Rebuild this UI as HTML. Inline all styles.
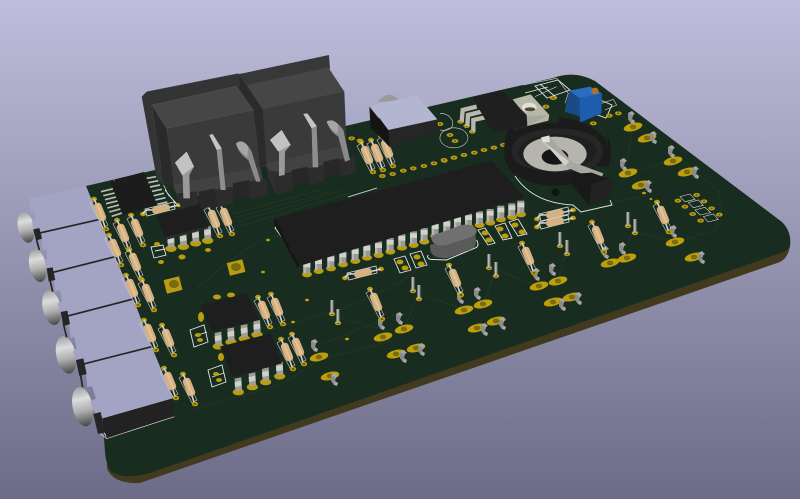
<!DOCTYPE html>
<html><head><meta charset="utf-8"><title>PCB 3D view</title>
<style>html,body{margin:0;padding:0;width:800px;height:499px;overflow:hidden;background:#8f8fae}svg{display:block}</style></head>
<body>
<svg width="800" height="499" viewBox="0 0 800 499" xmlns="http://www.w3.org/2000/svg">
<defs>
<linearGradient id="bg" x1="0" y1="0" x2="0" y2="1"><stop offset="0" stop-color="#bebedc"/><stop offset="1" stop-color="#6c6c88"/></linearGradient>
<linearGradient id="met" x1="0" y1="0" x2="0" y2="1"><stop offset="0" stop-color="#a0a0a0"/><stop offset=".3" stop-color="#dcdcdc"/><stop offset=".6" stop-color="#b0b0b0"/><stop offset="1" stop-color="#484848"/></linearGradient>
<g id="r">
<path d="M-10,-9 L-5,-12 L8,13 L3,16 Z" fill="none" stroke="#cfcfcf" stroke-width=".6"/>
<ellipse cx="-6" cy="-13" rx="3" ry="2.2" fill="#b99c10"/><ellipse cx="6" cy="17" rx="3.2" ry="2.3" fill="#b99c10"/>
<ellipse cx="6" cy="17" rx="1.4" ry="1" fill="#6d5c10"/>
<path d="M-6,-13 L0,0 L5,15" stroke="#cfcfcf" stroke-width="1.6" fill="none"/>
<rect x="-9.5" y="-4" width="19" height="8" rx="3.5" fill="#d6b283" transform="rotate(68)"/>
<rect x="-8.5" y="-1.2" width="17" height="2" rx="1" fill="#e2c496" transform="rotate(68)"/>
</g>
<g id="rh">
<path d="M-16,0 L-14,7 L14,0 L13,-7 Z" fill="none" stroke="#ddd" stroke-width=".8"/>
<ellipse cx="-18" cy="5" rx="3" ry="2.2" fill="#b99c10"/><ellipse cx="18" cy="-4" rx="3" ry="2.2" fill="#b99c10"/>
<path d="M-18,5 Q-16,0 -10,1 L10,-2 L18,-4" stroke="#d5d5d5" stroke-width="1.6" fill="none"/>
<rect x="-9" y="-3.5" width="18" height="7" rx="3" fill="#d6b283" transform="rotate(-13)"/>
</g>
<g id="o"><ellipse rx="9.5" ry="4" fill="#bd9f0c" transform="rotate(-14)"/><ellipse rx="3.2" ry="2.4" fill="#7a6a12"/></g>
<g id="c"><path d="M-3,-5 L1,-7 L4,-4 L2,-3 L1,1 L4,3 L3,6 L0,5 L-3,1 Z" fill="#a6a6a6"/><path d="M-3,-5 L-3,1 L0,5 L1,1 L1,-3 Z" fill="#8b8b8b"/></g>
<g id="p"><ellipse cx="0" cy="6" rx="3.2" ry="2.2" fill="#b99c10"/><ellipse cx="0" cy="6" rx="1.3" ry="1" fill="#6d5c10"/><rect x="-1.4" y="-8" width="2.8" height="14" fill="#9a9a9a"/><rect x="-1.4" y="-8" width="1.2" height="14" fill="#bdbdbd"/></g>
<g id="dp"><ellipse cx="1" cy="23" rx="15" ry="9" fill="#b99c10"/><rect x="-10" y="-18" width="21" height="38" fill="#9a9a94"/><rect x="-10" y="-12" width="21" height="14" fill="#d2d2cc"/><rect x="-10" y="2" width="7" height="18" fill="#b8b8b2"/></g>
<g id="v"><ellipse rx="10" ry="6" fill="#b99c10"/><ellipse rx="3.5" ry="2.5" fill="#5f5312"/></g>
<g id="ep"><ellipse cx="1" cy="24" rx="17" ry="10" fill="#b99c10"/><path d="M-10,-16 L10,-20 L12,18 L-8,22 Z" fill="#9f9f9a"/><path d="M-10,-6 L10,-10 L11,5 L-9,9 Z" fill="#cfcfc9"/></g>
</defs>
<rect width="800" height="499" fill="url(#bg)"/>

<!-- board edge -->
<path d="M107,468 C110,478 122,484 140,483 L780,262 Q788,258 790,246 L786,240 L107,460 Z" fill="#413a1e"/>
<!-- board -->
<path d="M86,186 L553,78 Q575,70 595,81 L782,222 Q792,232 790,246 Q788,251 778,254 L150,473 Q125,480 112,472 Q106,466 105,452 Z" fill="#182d1f"/>

<!-- traces -->
<g fill="none" stroke="#263f1f" stroke-width=".6">
<path d="M232,214 L320,190"/><path d="M234,218 L330,192"/><path d="M236,222 L345,190"/><path d="M240,226 L350,193"/>
<path d="M197,288 L227,263 L260,240 L290,232"/>
<path d="M200,300 L212,332 L245,400"/>
<path d="M270,330 L345,308 L400,283 L430,258 L480,245"/>
<path d="M338,318 L390,331"/><path d="M419,293 L404,329"/><path d="M419,293 L464,310"/><path d="M496,270 L483,304"/><path d="M496,270 L539,286"/><path d="M567,248 L558,281"/>
<path d="M190,410 L280,385 L320,360 L395,340"/>
<path d="M320,345 L395,315"/>
<path d="M633,127 L625,170"/><path d="M628,173 L673,160"/>
<path d="M680,158 L718,191 L722,207 L715,230 L677,242"/><path d="M635,232 L677,242"/><path d="M632,232 L620,262"/>
<path d="M600,205 L650,195"/><path d="M542,190 L585,165"/>
<path d="M475,190 L500,180 L545,178"/>
<path d="M500,128 L530,118"/><path d="M622,115 L632,125"/>
</g>

<!-- silkscreen -->
<g fill="none" stroke="#e4e4e4" stroke-width=".9">
<path d="M515,176 Q533,203 573,205 L581,212 L612,205 L610,200"/>
<path d="M283,222 L275,228 L300,262 L307,268"/>
<path d="M348,197 L377,188"/>
<path d="M100,425 L107,438 L174,412"/>
<path d="M535,86 L558,80 L570,90 L547,98 Z"/><path d="M540,84 L557,98"/><path d="M525,93 L548,87"/>
<path d="M165,190 L178,206"/>
<path d="M600,100 L612,105 L606,118 L590,112 Z"/>
</g>
<g fill="none" stroke="#e4e4e4" stroke-width=".9">
<path d="M151,247 L163,245 L166,255 L154,258 Z"/><path d="M155,251 L165,249"/>
<path d="M208,370 L222,365 L226,382 L212,387 Z"/><path d="M212,377 L224,373"/>
<path d="M190,330 L204,325 L208,342 L194,347 Z"/><path d="M195,336 L207,332"/>
<path d="M478,230 L485,228 L495,243 L488,245 Z"/><path d="M495,226 L505,223 L512,238 L503,240 Z"/><path d="M509,222 L518,219 L527,234 L518,236 Z"/>
<path d="M394,259 L405,256 L411,270 L400,273 Z"/><path d="M410,254 L421,251 L427,265 L416,268 Z"/>
</g>

<!-- small silk pads -->
<g fill="#b99c10">
<ellipse cx="485" cy="233" rx="3.5" ry="2.5"/><ellipse cx="489" cy="240" rx="3.5" ry="2.5"/><ellipse cx="500" cy="229" rx="3.5" ry="2.5"/><ellipse cx="505" cy="236" rx="3.5" ry="2.5"/><ellipse cx="515" cy="225" rx="3.5" ry="2.5"/><ellipse cx="522" cy="232" rx="3.5" ry="2.5"/>
<ellipse cx="400" cy="262" rx="3.5" ry="2.5"/><ellipse cx="405" cy="268" rx="3.5" ry="2.5"/><ellipse cx="417" cy="257" rx="3.5" ry="2.5"/><ellipse cx="421" cy="264" rx="3.5" ry="2.5"/>
<ellipse cx="157" cy="244" rx="3" ry="2"/><ellipse cx="161" cy="262" rx="3" ry="2"/><ellipse cx="182" cy="257" rx="3.5" ry="2.5"/><ellipse cx="208" cy="250" rx="3" ry="2"/>
<ellipse cx="198" cy="335" rx="3" ry="2"/><ellipse cx="200" cy="340" rx="3" ry="2"/><ellipse cx="216" cy="374" rx="3" ry="2"/><ellipse cx="219" cy="380" rx="3" ry="2"/>
<ellipse cx="217" cy="297" rx="4" ry="2.5"/><ellipse cx="231" cy="295" rx="4" ry="2.5"/><ellipse cx="201" cy="317" rx="3" ry="5"/><ellipse cx="221" cy="357" rx="3" ry="4"/>
<ellipse cx="263" cy="272" rx="2" ry="1.3"/><ellipse cx="268" cy="240" rx="2" ry="1.3"/><ellipse cx="347" cy="339" rx="2" ry="1.4"/><ellipse cx="307" cy="300" rx="2" ry="1.4"/><ellipse cx="293" cy="322" rx="2" ry="1.3"/>
<ellipse cx="644" cy="193" rx="2" ry="1.3"/><ellipse cx="651" cy="199" rx="1.5" ry="1"/>
</g>
<g><rect x="165" y="278" width="16" height="14" fill="#b99c10" transform="rotate(-14 173 285)"/><ellipse cx="174" cy="284" rx="5" ry="4" fill="#7a6a12"/>
<rect x="228" y="261" width="16" height="13" fill="#b99c10" transform="rotate(-14 236 267)"/><ellipse cx="236" cy="267" rx="5" ry="4" fill="#7a6a12"/></g>

<!-- row of vias, rear -->
<g transform="translate(130,50) scale(.3333)">
<use href="#v" x="757" y="378"/><use href="#v" x="788" y="372"/><use href="#v" x="820" y="362"/><use href="#v" x="850" y="355"/><use href="#v" x="882" y="348"/><use href="#v" x="912" y="340"/><use href="#v" x="943" y="332"/><use href="#v" x="972" y="323"/>
<use href="#v" x="665" y="265" /><use href="#v" x="690" y="272"/>
</g>
<g transform="translate(440,60) scale(.3333)">
<use href="#v" x="12" y="300"/><use href="#v" x="42" y="293"/><use href="#v" x="72" y="285"/><use href="#v" x="103" y="278"/><use href="#v" x="132" y="270"/><use href="#v" x="162" y="263"/><use href="#v" x="190" y="255"/>
<use href="#v" x="62" y="185"/><use href="#v" x="80" y="198"/><use href="#v" x="97" y="215"/><use href="#v" x="0" y="192"/><use href="#v" x="30" y="225"/><use href="#v" x="45" y="243"/>
<use href="#v" x="340" y="114"/><use href="#v" x="318" y="140"/>
<use href="#v" x="460" y="190"/><use href="#v" x="508" y="167"/><use href="#v" x="535" y="160"/>
<use href="#v" x="714" y="422"/><use href="#v" x="770" y="405"/><use href="#v" x="735" y="440"/><use href="#v" x="792" y="424"/><use href="#v" x="758" y="462"/><use href="#v" x="815" y="445"/><use href="#v" x="782" y="482"/><use href="#v" x="838" y="464"/>
</g>

<!-- right silk & pads -->
<g fill="none" stroke="#e4e4e4" stroke-width="1.6" transform="translate(440,60) scale(.3333)">
<path d="M720,410 L750,402 L765,418 L735,425 Z"/><path d="M745,428 L775,420 L790,436 L760,443 Z"/><path d="M765,450 L795,442 L812,458 L780,465 Z"/><path d="M790,470 L820,462 L835,478 L805,486 Z"/>
<path d="M250,75 L350,55 L385,100 L375,130"/><path d="M285,110 L350,80"/><path d="M485,130 L520,118 L530,135 L495,150"/>
<path d="M0,160 a38,30 0 0,1 36,40 a30,25 0 0,1 -36,10"/><path d="M0,230 a42,30 0 1,0 82,-5 a42,30 0 0,0 -82,5"/>
</g>

<!-- oval pads + clips -->
<g>
<use href="#o" x="319" y="357"/><use href="#o" x="383" y="337"/><use href="#o" x="404" y="329"/><use href="#o" x="464" y="310"/><use href="#o" x="483" y="304"/><use href="#o" x="539" y="286"/><use href="#o" x="558" y="281"/>
<use href="#c" x="314" y="346"/><use href="#c" x="381" y="324"/><use href="#c" x="399" y="319"/><use href="#c" x="460" y="298"/><use href="#c" x="477" y="294"/><use href="#c" x="536" y="275"/><use href="#c" x="552" y="270"/>
<use href="#o" x="330" y="376"/><use href="#c" x="334" y="380"/><use href="#o" x="396" y="354"/><use href="#c" x="403" y="357"/><use href="#o" x="416" y="348"/><use href="#c" x="421" y="350"/><use href="#o" x="477" y="328"/><use href="#c" x="484" y="330"/><use href="#o" x="496" y="321"/><use href="#c" x="502" y="324"/><use href="#o" x="553" y="302"/><use href="#c" x="562" y="305"/><use href="#o" x="572" y="297"/><use href="#c" x="578" y="299"/>
<use href="#o" x="675" y="242"/><use href="#c" x="673" y="232"/><use href="#o" x="694" y="257"/><use href="#c" x="701" y="258"/>
<use href="#o" x="633" y="127"/><use href="#c" x="631" y="118"/><use href="#o" x="647" y="138"/><use href="#c" x="653" y="138"/><use href="#o" x="673" y="161"/><use href="#c" x="671" y="152"/><use href="#o" x="628" y="173"/><use href="#c" x="623" y="165"/><use href="#o" x="687" y="172"/><use href="#c" x="695" y="173"/><use href="#o" x="641" y="185"/><use href="#c" x="648" y="187"/>
<use href="#o" x="610" y="263"/><use href="#c" x="605" y="253"/><use href="#o" x="627" y="258"/><use href="#c" x="622" y="249"/>
</g>

<!-- small pins -->
<use href="#p" x="332" y="308"/><use href="#p" x="338" y="317"/><use href="#p" x="413" y="285"/><use href="#p" x="419" y="293"/><use href="#p" x="489" y="262"/><use href="#p" x="496" y="270"/><use href="#p" x="560" y="240"/><use href="#p" x="567" y="248"/><use href="#p" x="628" y="220"/><use href="#p" x="635" y="227"/>

<!-- connector plugs -->
<g transform="translate(0,150) scale(.3333)">
<g fill="url(#met)">
<ellipse cx="78" cy="232" rx="24" ry="47" transform="rotate(-12 78 232)"/>
<ellipse cx="113" cy="347" rx="25" ry="50" transform="rotate(-12 113 347)"/>
<ellipse cx="155" cy="473" rx="27" ry="53" transform="rotate(-12 155 473)"/>
<ellipse cx="198" cy="615" rx="29" ry="57" transform="rotate(-12 198 615)"/>
<ellipse cx="248" cy="770" rx="30" ry="60" transform="rotate(-12 248 770)"/>
</g>
<g fill="#a3a3c3">
<path d="M88,145 L258,108 L300,208 L125,245 L100,240 L96,215 L106,208 L104,182 L90,182 Z"/>
<path d="M125,250 L300,208 L345,320 L165,365 L140,358 L133,330 L142,325 L140,298 L128,298 Z"/>
<path d="M160,365 L345,320 L400,447 L210,497 L182,490 L172,460 L186,455 L180,420 L165,425 Z"/>
<path d="M205,497 L400,447 L455,590 L258,642 L230,630 L218,605 L230,595 L222,560 L212,565 Z"/>
<path d="M255,642 L455,590 L520,745 L310,805 L285,790 L270,755 L288,745 L275,708 L262,712 Z"/>
</g>
<path d="M310,805 L520,745 L523,800 L320,866 Z" fill="#222"/>
<path d="M300,850 L320,866 L523,800" fill="none" stroke="#ddd" stroke-width="2"/>
<g stroke="#252525" stroke-width="5" fill="none"><path d="M115,250 L300,208"/><path d="M155,368 L345,320"/><path d="M195,500 L400,447"/><path d="M240,645 L455,590"/><path d="M110,270 L118,300"/><path d="M150,390 L158,425"/><path d="M190,520 L200,562"/><path d="M240,665 L248,712"/></g>
<g fill="#252525"><path d="M100,238 L118,234 L126,266 L108,272 Z"/><path d="M140,355 L158,352 L166,390 L146,394 Z"/><path d="M182,486 L202,482 L210,522 L190,528 Z"/><path d="M228,630 L250,625 L260,672 L238,678 Z"/><path d="M280,792 L302,786 L316,848 L294,852 Z"/></g>
</g>

<!-- resistors -->
<use href="#r" x="376" y="302"/><use href="#r" x="455" y="278"/><use href="#r" x="528" y="256"/><use href="#r" x="598" y="235"/><use href="#r" x="663" y="215"/>
<use href="#r" x="100" y="212"/><use href="#r" x="123" y="233"/><use href="#r" x="137" y="228"/><use href="#r" x="115" y="248"/><use href="#r" x="135" y="262"/><use href="#r" x="132" y="288"/><use href="#r" x="148" y="293"/><use href="#r" x="150" y="333"/><use href="#r" x="168" y="338"/><use href="#r" x="170" y="381"/><use href="#r" x="189" y="387"/>
<use href="#r" x="214" y="219"/><use href="#r" x="226" y="217"/><use href="#r" x="264" y="310"/><use href="#r" x="277" y="307"/><use href="#r" x="287" y="352"/><use href="#r" x="298" y="347"/>
<use href="#r" x="367" y="155"/><use href="#r" x="377" y="153"/><use href="#r" x="387" y="149"/>
<use href="#rh" x="363" y="273"/><use href="#rh" x="555" y="214"/><use href="#rh" x="555" y="222"/>

<!-- SOIC -->
<g transform="translate(0,150) scale(.3333)">
<g stroke="#bcbcb4" stroke-width="5">
<path d="M303,125 L345,115M310,137 L348,128M315,149 L352,140M318,161 L356,152M322,174 L360,164M328,186 L364,176M335,199 L369,188"/>
<path d="M440,85 L468,80M445,98 L475,92M450,111 L480,105M456,124 L486,118M461,137 L492,130M466,150 L497,143M472,163 L502,156"/>
</g>
<path d="M330,92 L432,66 L470,165 L368,195 Z" fill="#1c1c1c"/>
<circle cx="342" cy="91" r="3" fill="#555"/>
<path d="M488,100 L505,135 L530,160" fill="none" stroke="#ddd" stroke-width="2"/>
</g>
<use href="#rh" x="161" y="209"/>

<!-- DIP 8s -->
<g transform="translate(0,150) scale(.3333)">
<use href="#ep" x="512" y="272"/><use href="#ep" x="549" y="266"/><use href="#ep" x="586" y="256"/><use href="#ep" x="622" y="248"/>
<path d="M470,198 L600,163 L625,228 L495,262 Z" fill="#1e1e1e"/><path d="M495,262 L625,228 L625,235 L497,270 Z" fill="#2a2a2a"/>
<use href="#ep" x="654" y="565"/><use href="#ep" x="692" y="552"/><use href="#ep" x="732" y="542"/><use href="#ep" x="770" y="530"/>
<path d="M600,465 L740,430 L778,510 L635,545 Z" fill="#1e1e1e"/>
<use href="#ep" x="714" y="702"/><use href="#ep" x="756" y="687"/><use href="#ep" x="796" y="672"/><use href="#ep" x="838" y="655"/>
<path d="M660,590 L812,550 L846,640 L698,682 Z" fill="#1e1e1e"/>
</g>

<!-- DIP 40 + crystal -->
<g transform="translate(260,160) scale(.3333)">
<use href="#dp" x="140" y="320"/><use href="#dp" x="175" y="310"/><use href="#dp" x="212" y="302"/><use href="#dp" x="248" y="290"/><use href="#dp" x="285" y="280"/><use href="#dp" x="320" y="270"/><use href="#dp" x="355" y="262"/><use href="#dp" x="390" y="252"/><use href="#dp" x="425" y="240"/><use href="#dp" x="460" y="232"/><use href="#dp" x="492" y="222"/><use href="#dp" x="525" y="205"/><use href="#dp" x="560" y="197"/><use href="#dp" x="592" y="185"/><use href="#dp" x="625" y="178"/><use href="#dp" x="658" y="172"/><use href="#dp" x="690" y="165"/><use href="#dp" x="722" y="155"/><use href="#dp" x="755" y="148"/><use href="#dp" x="782" y="140"/>
<path d="M45,175 L695,2 L795,112 L118,318 Z" fill="#1e1e1e"/>
<path d="M45,175 L118,318 L112,322 L42,190 Z" fill="#151515"/>
<path d="M505,285 Q498,290 510,298 L560,300 L650,262 Q658,255 650,240" fill="none" stroke="#e6e6e6" stroke-width="3"/>
<path d="M510,255 L512,275 Q520,295 560,295 L630,270 Q650,262 648,240 L645,215 Z" fill="#5a5a5a"/>
<path d="M515,240 Q510,225 535,220 L605,195 Q640,190 650,210 Q652,225 630,232 L560,255 Q525,262 515,240 Z" fill="#707070"/>
</g>

<!-- rear blocks -->
<g transform="translate(130,50) scale(.3333)">
<!-- right block -->
<path d="M325,72 L338,70 L597,15 L600,55 L595,60 L643,125 L412,350 L390,350 L370,180 L320,108 Z" fill="#383838"/>
<path d="M325,75 L350,105 L398,178 L412,345 L390,350 L370,180 L320,108 Z" fill="#2b2b2b"/>
<path d="M350,105 L595,52 L643,125 L398,178 Z" fill="#464646"/>
<path d="M398,178 L643,125 L650,290 L410,350 Z" fill="#3a3a3a"/>
<path d="M408,340 L650,285 L655,330 L420,380 Z" fill="#424242"/>
<path d="M412,360 L485,372 L490,410 L438,432 L414,380 Z" fill="#303030"/>
<path d="M430,378 L485,368 L488,422 L440,432 Z" fill="#2c2c2c"/>
<path d="M485,360 L532,350 L535,395 L488,405 Z" fill="#272727"/>
<path d="M532,355 L580,345 L583,392 L538,408 Z" fill="#2c2c2c"/>
<path d="M580,335 L628,325 L630,372 L583,385 Z" fill="#272727"/>
<path d="M628,330 L675,320 L677,368 L632,380 Z" fill="#2c2c2c"/>
<path d="M420,270 L455,240 L482,285 L465,305 L464,375 L447,378 L447,300 Z" fill="#9a9a9a"/><path d="M420,270 L455,240 L482,285 L445,305 Z" fill="#c2c2c2"/>
<path d="M520,192 L532,190 L560,228 L565,352 L548,352 L545,235 Z" fill="#8e8e8e"/><path d="M520,192 L532,190 L560,228 L545,235 Z" fill="#c4c4c4"/>
<path d="M590,215 Q610,200 640,240 L660,330 L645,335 L625,260 Q600,245 590,215 Z" fill="#8a8a8a"/><path d="M590,215 Q610,205 625,225 L622,250 Q600,240 590,215Z" fill="#a6a6a6"/>
<!-- left block -->
<path d="M35,140 L50,125 L325,70 L330,108 L320,108 L65,165 L100,400 L135,440 L80,385 Z" fill="#343434"/>
<path d="M65,165 L110,235 L135,420 L100,400 Z" fill="#2a2a2a"/>
<path d="M65,165 L320,108 L370,180 L110,235 Z" fill="#464646"/>
<path d="M110,235 L370,180 L390,350 L132,410 Z" fill="#3a3a3a"/>
<path d="M130,405 L390,350 L400,395 L145,450 Z" fill="#424242"/>
<path d="M135,430 L200,425 L205,462 L155,476 Z" fill="#2c2c2c"/>
<path d="M205,425 L255,415 L260,470 L212,475 Z" fill="#272727"/>
<path d="M255,420 L308,410 L310,460 L262,472 Z" fill="#2c2c2c"/>
<path d="M308,400 L358,390 L360,440 L312,450 Z" fill="#272727"/>
<path d="M358,395 L410,385 L412,435 L362,447 Z" fill="#2c2c2c"/>
<path d="M135,338 L170,305 L192,350 L178,375 L180,445 L160,445 L158,380 Z" fill="#9a9a9a"/><path d="M135,338 L170,305 L192,350 L158,375 Z" fill="#c2c2c2"/>
<path d="M238,255 L248,252 L275,295 L287,420 L272,420 L260,300 Z" fill="#8e8e8e"/><path d="M238,255 L248,252 L275,295 L260,300 Z" fill="#c4c4c4"/>
<path d="M318,280 Q340,260 365,305 L392,395 L378,395 L355,330 Q325,310 318,280 Z" fill="#8a8a8a"/><path d="M318,280 Q340,268 355,290 L352,320 Q325,305 318,280Z" fill="#a6a6a6"/>
<!-- can -->
<path d="M742,156 Q775,115 810,152 Z" fill="#9a9a9a"/>
<path d="M718,170 L775,240 L780,292 L722,232 Z" fill="#141414"/>
<path d="M775,240 L922,208 L925,240 L780,292 Z" fill="#262626"/>
<path d="M722,168 L860,135 L922,208 L775,240 Z" fill="#b2b6d0"/>
</g>

<!-- regulator, trimmer, battery -->
<g transform="translate(440,60) scale(.3333)">
<g stroke="#b8b8b0" stroke-width="13" fill="none"><path d="M65,185 L68,150 L110,140"/><path d="M82,198 L84,165 L125,155"/><path d="M100,215 L100,180 L145,170"/></g>
<path d="M218,118 L272,103 L328,165 L325,182 L262,198 L258,168 Z" fill="#b8b8a8"/><path d="M258,168 L328,165 L262,198 Z" fill="#a8a89c"/>
<ellipse cx="268" cy="142" rx="22" ry="14" fill="#e0e0d8"/><ellipse cx="270" cy="148" rx="16" ry="6" fill="#4e4a30"/>
<path d="M97,113 L185,90 L260,165 L262,195 L160,218 L148,200 Z" fill="#1f1f1f"/>
<path d="M388,92 L418,112 L420,170 L374,155 Z" fill="#1c4a86"/>
<path d="M418,112 L486,100 L484,160 L420,188 Z" fill="#1e5cb0"/>
<path d="M388,92 L450,80 L486,100 L418,114 Z" fill="#2a6cc0"/>
<ellipse cx="465" cy="93" rx="11" ry="10" fill="#b0702c"/>
<!-- holder -->
<circle cx="347" cy="397" r="11" fill="#111"/>
<path d="M193,285 Q190,240 205,205 L222,205 L222,215 Q270,190 355,188 L357,172 Q440,175 500,240 L510,300 Q500,320 465,320 L455,340 L520,362 L508,410 L447,436 L395,372 Q290,390 220,340 Q195,315 193,285 Z" fill="#1b1b1b"/>
<path d="M500,220 Q510,250 495,320 L505,320 Q520,280 508,240 Z" fill="#1b1b1b"/>
<path d="M215,275 Q215,215 340,205 Q470,205 488,262 Q495,310 440,330 Q350,345 270,325 Q215,310 215,275 Z" fill="#262626"/>
<path d="M235,280 Q240,230 345,222 Q450,225 470,265 Q470,300 430,318 Q340,335 270,320 Q235,305 235,280 Z" fill="#1f1f1f"/>
<ellipse cx="345" cy="282" rx="95" ry="52" fill="#b5b5ad"/>
<ellipse cx="345" cy="290" rx="40" ry="24" fill="#151515"/>
<path d="M305,235 L328,228 L395,305 L490,340 L480,365 L375,320 Z" fill="#a8a8a0"/>
<path d="M303,232 L328,226 L330,246 L308,248 Z" fill="#e0e0d8"/>
<path d="M305,240 L388,305 L375,318 Z" fill="#d0d0c8"/>
<path d="M395,342 L455,338 L520,362 L447,436 L395,372 Z" fill="#191919"/>
<path d="M455,372 L510,355 L520,362 L510,410 L447,436 Z" fill="#222"/>
</g>
</svg>
</body></html>
